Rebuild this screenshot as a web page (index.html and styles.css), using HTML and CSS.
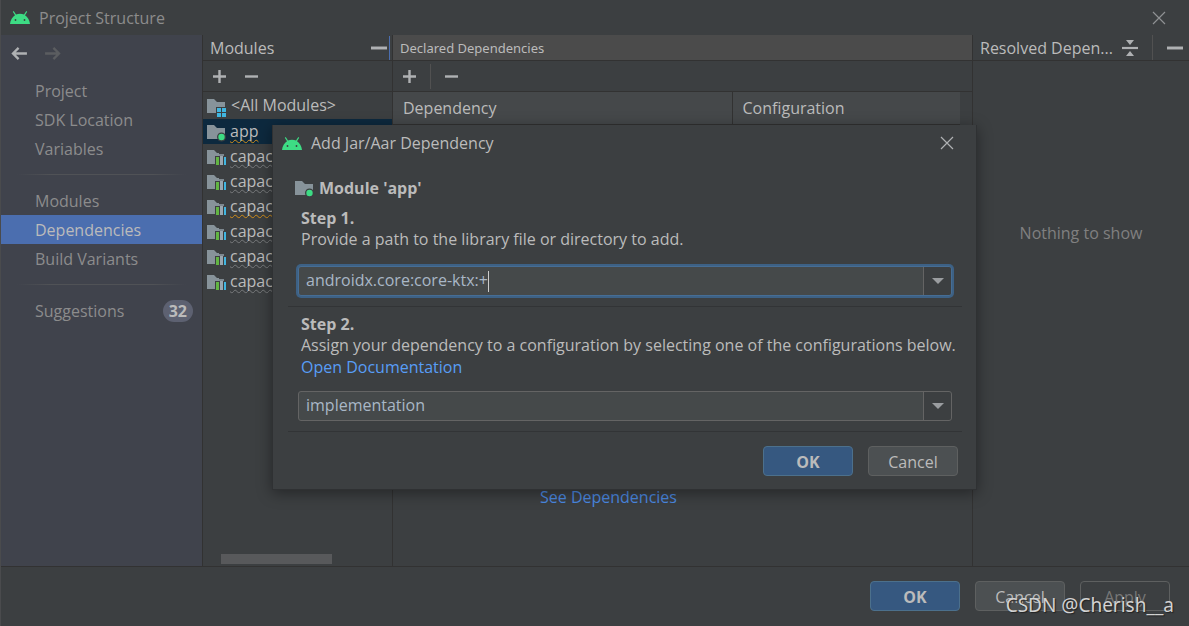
FILE: index.html
```html
<!DOCTYPE html>
<html lang="en">
<head>
<meta charset="utf-8">
<title>Project Structure</title>
<link rel="stylesheet" href="styles.css">
</head>
<body>
<svg class="defs" aria-hidden="true">
  <symbol id="android" viewBox="0 0 20 13"><path d="M0 13C.3 8.800 2.500 5.800 5 4.200L2.800.7 3.700.1 6 3.600C8.500 2.500 11.500 2.500 14 3.600L16.300.1 17.200.7 15 4.200C17.500 5.800 19.700 8.800 20 13Z" fill="#3ddc84"/><circle cx="5.500" cy="9" r=".9" fill="#3c3f41"/><circle cx="14.500" cy="9" r=".9" fill="#3c3f41"/></symbol>
  <symbol id="folder" viewBox="0 0 20 18"><path d="M0 0H7L10 3H18V14H0Z" fill="#87939a"/></symbol>
  <symbol id="f-all" viewBox="0 0 20 18"><use href="#folder" width="20" height="18"/><path d="M9 8H20V18H9Z" fill="#3c3f41"/><path d="M10 9h4v4h-4zM15 9h4v4h-4zM10 14h4v4h-4zM15 14h4v4h-4z" fill="#40b6e0"/></symbol>
  <symbol id="f-app" viewBox="0 0 20 18"><use href="#folder" width="20" height="18"/><circle cx="14.500" cy="12" r="4.500" fill="#3c3f41"/><circle cx="14.500" cy="12" r="3.200" fill="#3ddc84"/></symbol>
  <symbol id="f-lib" viewBox="0 0 20 18"><use href="#folder" width="20" height="18"/><path d="M8 6H12V3H18V6H20V15H8Z" fill="#3c3f41"/><path d="M9 7h3v8H9z" fill="#62b543"/><path d="M12 4h5v2h-5z" fill="#7d888f"/><path d="M13 6h3v9h-3z" fill="#9aa7b0"/><path d="M17 7h2v8h-2z" fill="#40b6e0"/></symbol>
  <symbol id="close" viewBox="0 0 14 14"><path d="M1 1 13 13M13 1 1 13" stroke="currentColor" stroke-width="1.200"/></symbol>
  <symbol id="plus" viewBox="0 0 14 14"><path d="M0 7H14M7 0V14" stroke="currentColor" stroke-width="2.600"/></symbol>
  <symbol id="minus" viewBox="0 0 14 14"><path d="M0 7H14" stroke="currentColor" stroke-width="2.600"/></symbol>
  <symbol id="arrow" viewBox="0 0 18 14"><path d="M17 7H2M8 1 2 7 8 13" stroke="currentColor" stroke-width="2.500" fill="none"/></symbol>
  <symbol id="collapse" viewBox="0 0 16 16"><path d="M0 8H16" stroke="currentColor" stroke-width="2.200"/><path d="M4 0H12L8 5ZM4 16H12L8 11Z" fill="currentColor"/></symbol>
</svg>
<div class="window">
  <header class="titlebar">
    <svg class="logo"><use href="#android"/></svg>
    <h1>Project Structure</h1>
    <button class="icon-btn dim" aria-label="Close"><svg class="i14"><use href="#close"/></svg></button>
  </header>
  <main class="body">
    <aside class="sidebar">
      <div class="history">
        <button class="icon-btn" aria-label="Back"><svg class="arrow"><use href="#arrow"/></svg></button>
        <button class="icon-btn off" aria-label="Forward"><svg class="arrow flip"><use href="#arrow"/></svg></button>
      </div>
      <nav>
        <a href="#">Project</a>
        <a href="#">SDK Location</a>
        <a href="#">Variables</a>
        <hr>
        <a href="#">Modules</a>
        <a href="#" class="current">Dependencies</a>
        <a href="#">Build Variants</a>
        <hr>
        <a href="#">Suggestions <span class="count">32</span></a>
      </nav>
    </aside>
    <section class="modules">
      <div class="head"><h2>Modules</h2><button class="icon-btn" aria-label="Hide modules"><svg class="i16"><use href="#minus"/></svg></button><i class="mark"></i></div>
      <div class="tools">
        <button class="icon-btn" aria-label="Add module"><svg class="i13"><use href="#plus"/></svg></button>
        <button class="icon-btn" aria-label="Remove module"><svg class="i13"><use href="#minus"/></svg></button>
      </div>
      <ul class="list">
        <li class="all"><svg><use href="#f-all"/></svg>&lt;All Modules&gt;</li>
        <li class="picked"><svg><use href="#f-app"/></svg><span class="wave warn">app</span></li>
        <li><svg><use href="#f-lib"/></svg><span class="wave">capac</span></li>
        <li><svg><use href="#f-lib"/></svg><span class="wave">capac</span></li>
        <li><svg><use href="#f-lib"/></svg><span class="wave warn">capac</span></li>
        <li><svg><use href="#f-lib"/></svg><span class="wave">capac</span></li>
        <li><svg><use href="#f-lib"/></svg><span class="wave">capac</span></li>
        <li><svg><use href="#f-lib"/></svg><span class="wave">capac</span></li>
      </ul>
      <div class="scroll"></div>
    </section>
    <section class="declared">
      <div class="head"><h2>Declared Dependencies</h2></div>
      <div class="tools">
        <button class="icon-btn" aria-label="Add dependency"><svg class="i13"><use href="#plus"/></svg></button>
        <i class="sep"></i>
        <button class="icon-btn" aria-label="Remove dependency"><svg class="i13"><use href="#minus"/></svg></button>
      </div>
      <table>
        <thead><tr><th>Dependency</th><th>Configuration</th></tr></thead>
      </table>
      <a class="see" href="#">See Dependencies</a>
    </section>
    <section class="resolved">
      <div class="head"><h2>Resolved Depen...</h2>
        <button class="icon-btn" aria-label="Collapse all"><svg class="i16"><use href="#collapse"/></svg></button>
        <i class="sep"></i>
        <button class="icon-btn" aria-label="Hide resolved"><svg class="i16"><use href="#minus"/></svg></button>
      </div>
      <p>Nothing to show</p>
    </section>
  </main>
  <footer class="actions">
    <button class="btn primary">OK</button>
    <button class="btn">Cancel</button>
    <button class="btn" disabled>Apply</button>
  </footer>
  <div class="dialog" role="dialog" aria-labelledby="dlg-title">
    <header class="dlg-title">
      <svg class="logo"><use href="#android"/></svg>
      <h2 id="dlg-title">Add Jar/Aar Dependency</h2>
      <button class="icon-btn" aria-label="Close dialog"><svg class="i14"><use href="#close"/></svg></button>
    </header>
    <h3 class="module"><svg><use href="#f-app"/></svg>Module 'app'</h3>
    <div class="step">
      <label for="path"><b>Step 1.</b><br>Provide a path to the library file or directory to add.</label>
      <div class="combo focus"><input id="path" type="text" value="androidx.core:core-ktx:+"><i class="caret"></i><button class="drop" aria-label="Show paths"></button></div>
    </div>
    <div class="step two">
      <label for="config"><b>Step 2.</b><br>Assign your dependency to a configuration by selecting one of the configurations below.</label>
      <a href="#">Open Documentation</a>
      <div class="combo"><select id="config"><option>implementation</option></select><i class="drop"></i></div>
    </div>
    <footer class="dlg-actions">
      <button class="btn primary">OK</button>
      <button class="btn">Cancel</button>
    </footer>
  </div>
  <div class="watermark">CSDN @Cherish__a</div>
</div>
</body>
</html>
```
FILE: styles.css
```css
* { box-sizing: border-box; }
body {
  margin: 0;
  background: #3c3f41;
  color: #bbbbbb;
  font: 16px/22px "Open Sans", "Noto Sans", sans-serif;
}
h1, h2, h3, p, ul { margin: 0; padding: 0; font: inherit; }
button, input, select { font: inherit; color: inherit; }
a { color: #589df6; text-decoration: none; }
svg { display: block; flex: none; }
.defs { position: absolute; width: 0; height: 0; }
.window {
  position: relative;
  display: flex;
  flex-direction: column;
  min-height: 100vh;
  border-left: 1px solid #4a4b4d;
  overflow: hidden;
}
.logo { width: 20px; height: 13px; }
.i13 { width: 13px; height: 13px; }
.i14 { width: 14px; height: 14px; }
.i16 { width: 16px; height: 16px; }
.arrow { width: 17px; height: 13px; }
.flip { transform: scaleX(-1); }
.icon-btn { border: 0; padding: 0; background: none; color: #afb1b3; }
.icon-btn.dim { color: #8f9193; }
.icon-btn.off { color: #5b5d60; }
.titlebar {
  display: flex;
  align-items: center;
  gap: 9px;
  height: 35px;
  padding: 0 23px 0 9px;
  color: #8c8c8c;
}
.titlebar h1, .dlg-title h2 { flex: 1; }

.body {
  flex: 1;
  display: grid;
  grid-template-columns: 202px 190px 1fr 216px;
  border-bottom: 1px solid #323232;
}
.sidebar { background: #40434c; border-right: 1px solid #323232; }
.history { display: flex; gap: 16px; height: 41px; padding: 12px 10px 0; align-items: flex-start; }
nav a {
  display: flex;
  align-items: center;
  justify-content: space-between;
  height: 29px;
  padding: 0 9px 0 34px;
  color: #8c8c8c;
}
nav a.current { background: #4b6eaf; color: #bbbbbb; }
nav hr {
  height: 1px;
  margin: 11px 16px;
  border: 0;
  background: linear-gradient(90deg, transparent, #505256 20%, #505256 80%, transparent);
}
.count {
  padding: 0 6px;
  border-radius: 11px;
  background: #5d6171;
  color: #bbbbbb;
  font-weight: bold;
}
.head, .tools { display: flex; align-items: center; border-bottom: 1px solid #323232; }
.head { height: 26px; padding-left: 7px; }
.head h2 { flex: 1; white-space: nowrap; }
.tools { height: 31px; padding-left: 10px; }
.sep { width: 1px; height: 25px; background: #515151; }
.modules { display: flex; flex-direction: column; border-right: 1px solid #323232; }
.modules .tools { gap: 19px; }
.mark { width: 1px; height: 24px; margin: 0 2px 0 2px; background: #4b6eaf; }
.list { flex: 1; list-style: none; padding-top: 1px; }
.list li { display: flex; align-items: center; gap: 3px; height: 25px; padding: 0 0 2px 4px; }
.list li.all { gap: 4px; height: 26px; }
.list svg { width: 20px; height: 18px; margin-top: 6px; }
.picked { background: #0d293e; }
.wave { text-decoration: underline wavy #77797b 1px; text-underline-offset: 2px; text-decoration-skip-ink: none; }
.wave.warn { text-decoration-color: #d08c1a; }
.scroll { width: 111px; height: 10px; margin: 0 0 2px 18px; background: #58595b; }

.declared { display: flex; flex-direction: column; border-right: 1px solid #323232; }
.declared .head { background: #4b4b4b; font-family: "Noto Sans", sans-serif; font-size: 13px; }
.declared .tools { gap: 14px; }
table { width: calc(100% - 12px); table-layout: fixed; border-collapse: collapse; border-bottom: 1px solid #4b6eaf; }
th {
  height: 32px;
  padding: 0 10px;
  background: #45484a;
  border-bottom: 1px solid #323232;
  text-align: left;
  font-weight: normal;
}
th:first-child { width: 339px; border-right: 1px solid #323232; }
.see { margin: auto 0 58px 147px; color: #4a88e0; align-self: flex-start; }
.resolved { text-align: center; color: #808080; }
.resolved .head { padding-right: 6px; gap: 14px; color: #bbbbbb; text-align: left; }
.resolved h2 { width: 0; }
.resolved p { padding-top: 161px; }

.actions, .dlg-actions { display: flex; justify-content: flex-end; gap: 15px; }
.actions { height: 59px; padding: 14px 19px 0; }
.btn {
  width: 90px;
  height: 30px;
  padding: 1px 0 0;
  border: 1px solid #5e6060;
  border-radius: 4px;
  background: #4c5052;
}
.btn.primary { background: #365880; border-color: #4c708c; font-weight: bold; }
.btn:disabled { background: none; color: #777777; }

.dialog {
  position: absolute;
  left: 271px;
  top: 125px;
  width: 705px;
  padding: 0 14px 13px 15px;
  background: #3c3f41;
  border: 1px solid #2f3133;
  border-top: 0;
  box-shadow: 0 3px 14px rgba(0, 0, 0, .4);
}
.dlg-title { display: flex; align-items: center; gap: 9px; height: 36px; padding-right: 8px; margin-left: -6px; }
.module { display: flex; align-items: center; gap: 4px; height: 47px; padding: 6px 0 0 7px; font-weight: bold; }
.module svg { width: 20px; height: 18px; margin-top: 4px; }
.step { padding: 0 10px 10px; border-bottom: 1px solid #323436; }
.step label { display: block; padding-left: 3px; line-height: 21px; white-space: nowrap; }
.step > a { display: block; width: max-content; padding-left: 3px; }
.step.two { padding-top: 7px; }
.combo {
  display: flex;
  align-items: center;
  height: 30px;
  margin-top: 13px;
  border: 1px solid #646464;
  border-radius: 3px;
  background: #45494a;
  color: #a9b7c6;
}
.combo.focus { margin-top: 16px; border-color: #466d94; box-shadow: 0 0 0 2px #3d6185; }
.combo input, .combo select {
  min-width: 0;
  padding: 0 0 2px 7px;
  border: 0;
  outline: 0;
  background: none;
  appearance: none;
}
.combo input { field-sizing: content; }
.combo select { flex: 1; }
.caret { width: 1px; height: 21px; background: #cccccc; }
.drop {
  display: grid;
  place-items: center;
  width: 28px;
  height: 28px;
  margin-left: auto;
  padding: 0;
  border: 0;
  border-left: 1px solid #646464;
  background: #3c3f41;
  border-radius: 0 3px 3px 0;
}
.drop::after { content: ""; border: 6px solid transparent; border-top-color: #9a9da0; border-bottom: 0; }
.dlg-actions { padding: 14px 4px 0; }
.watermark {
  position: absolute;
  right: 15px;
  bottom: 7px;
  color: #d2d2d2;
  font-family: "Noto Sans", sans-serif;
  font-size: 19px;
  line-height: 28px;
  text-shadow: 1px 1px 1px #222222;
  pointer-events: none;
}
```
